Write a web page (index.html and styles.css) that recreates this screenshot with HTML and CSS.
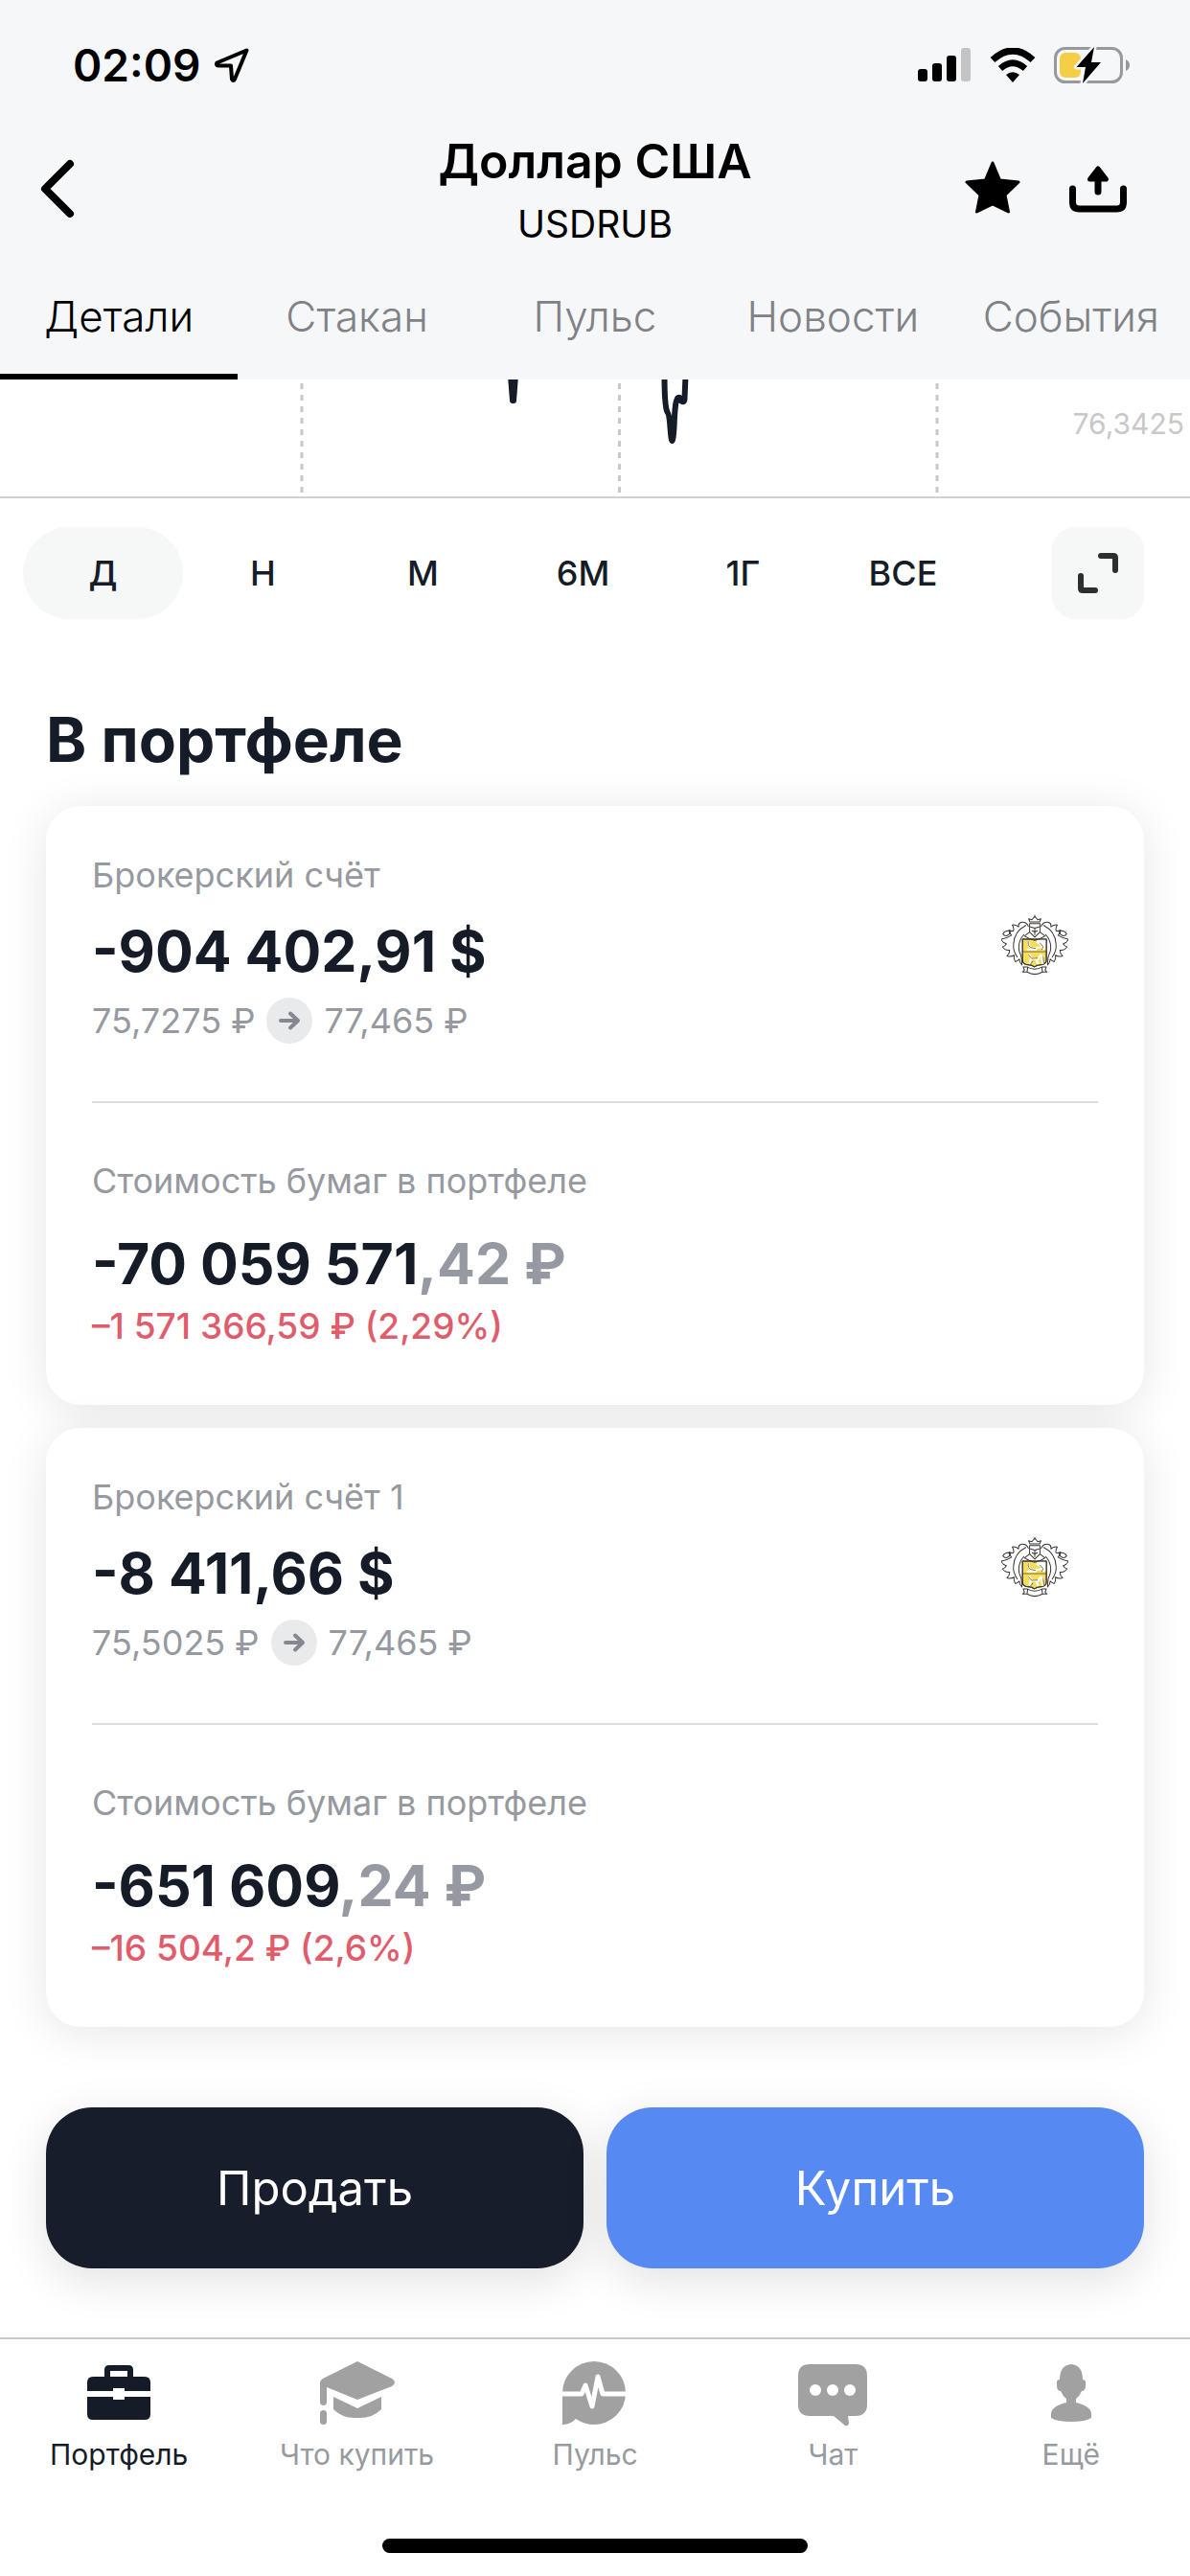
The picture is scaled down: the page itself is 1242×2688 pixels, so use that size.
FILE: index.html
```html
<!DOCTYPE html>
<html lang="ru">
<head>
    <meta charset="UTF-8">
    <meta name="viewport" content="width=device-width, initial-scale=1.0">
    <title>Доллар США</title>
    <link rel="stylesheet" href="styles.css">
</head>
<body>
    <svg width="0" height="0" class="defs" aria-hidden="true">
        <symbol id="emblem" viewBox="0 0 208 188">
            <g fill="none" stroke="#3a3733" stroke-width="3" stroke-linejoin="round" stroke-linecap="round">
                <!-- leaves -->
                <path d="M84 36Q78 22 62 24q-10 2-8 14-10-8-20-6 6 8 4 18-8 2-14-2 0 10 8 16-14 10-32 12 4 12 16 14-4 8-12 10 8 12 22 10 0 10-8 18 12 4 22-2-2 12 4 20 8-2 12-8 0 10 8 18 2-24-8-42-6-30 14-52"/>
                <path d="M124 36q6-14 22-12 10 2 8 14 10-8 20-6-6 8-4 18 8 2 14-2 0 10-8 16 14 10 32 12-4 12-16 14 4 8 12 10-8 12-22 10 0 10 8 18-12 4-22-2 2 12-4 20-8-2-12-8 0 10-8 18-2-24 8-42 6-30-14-52"/>
                <path d="M76 34Q40 52 38 92q-2 20 12 40M132 34q36 18 38 58 2 20-12 40"/>
                <path d="M5 60q8-14 24-8-4 12-14 14-6 0-10-6zM203 60q-8-14-24-8 4 12 14 14 6 0 10-6z"/>
                <!-- shield -->
                <path d="M66 76h74v64q0 12-12 15l-16 2-9 5-9-5-16-2q-12-3-12-15z" fill="#f7dc58"/>
                <path d="M110 78h28v30l-12-3-6-12-12-6z" fill="#fff" stroke="none"/>
                <path d="M85 84q-2 12 6 17l12 3q12 0 22-4l6 6M82 108h26" stroke="#fff" stroke-width="6"/>
                <path d="M88 150l4-14 22 2 8-12 8 6-4 6 4 14M94 138l-6-12M110 142l4 10" stroke="#fff" stroke-width="7"/>
                <path d="M66 115h74M84 84q-2 14 8 18l14 3M120 88l10 12-4 8M86 126l8 10 18-1M130 130l2 20M98 144l-6 8" stroke-width="2"/>
                <path d="M66 76h74v64q0 12-12 15l-16 2-9 5-9-5-16-2q-12-3-12-15z"/>
                <!-- helmet and crown -->
                <path d="M85 13l4 10h30l4-10-10 3-9-11-9 11zM104 2v6"/>
                <path d="M88 28v26l16 16 16-16V28zM91 38l13 4 13-4M104 42v20M96 50l8 4 8-4"/>
                <path d="M88 54L72 66l14 8 18 6 18-6 14-8-16-12"/>
                <!-- ribbon -->
                <path d="M68 162l12 0q24 14 48 0l12 0-4 10 6 6h-14q-24 14-48 0H66l6-6zM82 164l-2 14M126 164l2 14"/>
            </g>
        </symbol>
        <symbol id="arrow" viewBox="0 0 48 48">
            <circle cx="24" cy="24" r="24" fill="#e9eaec"/>
            <path d="M15 24h17M25 16.500l8 7.500-8 7.500" fill="none" stroke="#85888e" stroke-width="4" stroke-linecap="round" stroke-linejoin="round"/>
        </symbol>
    </svg>

    <header class="header">
        <div class="status">
            <div class="status-left">
                <span class="time">02:09</span>
                <svg width="38" height="38" viewBox="0 0 38 38">
                    <path d="M34.500 3.500L3.500 16.500q-1.500 2 1 3h13.500l1 14q1.500 3 3 0z" fill="none" stroke="#000" stroke-width="4" stroke-linejoin="round"/>
                </svg>
            </div>
            <div class="status-right">
                <svg width="56" height="36" viewBox="0 0 56 36">
                    <rect x="0" y="22" width="10" height="13" rx="3"/>
                    <rect x="15" y="16" width="10" height="19" rx="3"/>
                    <rect x="30" y="8" width="10" height="27" rx="3"/>
                    <rect x="45" y="0" width="10" height="35" rx="3" fill="#c3c4c6"/>
                </svg>
                <svg width="48" height="36" viewBox="0 0 48 36">
                    <path d="M3 12.500Q24-6.500 45 12.500" fill="none" stroke="#000" stroke-width="7"/>
                    <path d="M11 21.500q13-11.500 26 0" fill="none" stroke="#000" stroke-width="6.500"/>
                    <path d="M17 28q7-5.500 14 0l-7 8z"/>
                </svg>
                <svg width="80" height="40" viewBox="0 0 80 40">
                    <rect x="1.500" y="2.500" width="69" height="35" rx="10" fill="none" stroke="#98999b" stroke-width="3"/>
                    <path d="M75 14q4 2 4 6t-4 6z" fill="#98999b"/>
                    <rect x="6" y="7" width="22" height="26" rx="6" fill="#f6ce46"/>
                    <path d="M42 1L23.500 22h9.500L30 39l19-22H39z" stroke="#f6f7f9" stroke-width="5" stroke-linejoin="round"/>
                    <path d="M42 1L23.500 22h9.500L30 39l19-22H39z"/>
                </svg>
            </div>
        </div>

        <div class="nav">
            <button class="icon-button back" aria-label="Назад">
                <svg width="38" height="64" viewBox="0 0 38 64">
                    <path d="M33 5L7 31l26 26" fill="none" stroke="#000" stroke-width="8" stroke-linecap="round" stroke-linejoin="round"/>
                </svg>
            </button>
            <div class="nav-title">
                <h1>Доллар США</h1>
                <p>USDRUB</p>
            </div>
            <div class="nav-actions">
                <button class="icon-button" aria-label="В избранное">
                    <svg width="60" height="60" viewBox="0 0 60 60">
                        <path d="M30 2l7.500 18L57 22 43 35.500 46.500 53 30 45 13.500 53 17 35.500 3 22l19.500-2z" stroke="#000" stroke-width="3" stroke-linejoin="round"/>
                    </svg>
                </button>
                <button class="icon-button" aria-label="Поделиться">
                    <svg width="60" height="60" viewBox="0 0 60 60">
                        <path d="M3.500 29v14q0 7 7 7h39q7 0 7-7V29M30 32V16" fill="none" stroke="#000" stroke-width="7" stroke-linecap="round"/>
                        <path d="M30 8l8.500 11h-17z" stroke="#000" stroke-width="5" stroke-linejoin="round"/>
                    </svg>
                </button>
            </div>
        </div>

        <nav class="tabs">
            <a href="#" class="tab active">Детали</a>
            <a href="#" class="tab">Стакан</a>
            <a href="#" class="tab">Пульс</a>
            <a href="#" class="tab">Новости</a>
            <a href="#" class="tab">События</a>
        </nav>
    </header>

    <main>
        <div class="chart">
            <svg viewBox="0 0 1242 122">
                <path d="M315 4v118M646.500 4v118M978 4v118" stroke="#c8c8c8" stroke-width="3" stroke-dasharray="6 6"/>
                <path d="M533 -4l2 26h1l2-26M693.500 -4q0 32 3 38 2 2 3 16 1 14 2 14 1 0 2-14 1-30 4-31 3-1 3 3 4 3 4-2l1-24" fill="none" stroke="#151c28" stroke-width="6" stroke-linejoin="round"/>
            </svg>
            <span class="chart-label">76,3425</span>
        </div>

        <div class="periods">
            <div class="period-list">
                <button class="period active">Д</button>
                <button class="period">Н</button>
                <button class="period">М</button>
                <button class="period">6М</button>
                <button class="period">1Г</button>
                <button class="period">ВСЕ</button>
            </div>
            <button class="expand" aria-label="Развернуть">
                <svg width="48" height="48" viewBox="0 0 48 48">
                    <path d="M27 6h13q2 0 2 2v13M21 42H8q-2 0-2-2V27" fill="none" stroke="#2d2f2f" stroke-width="6" stroke-linecap="round"/>
                </svg>
            </button>
        </div>

        <section class="portfolio">
            <h2>В портфеле</h2>

            <article class="card">
                <div class="card-top">
                    <div>
                        <p class="label">Брокерский счёт</p>
                        <p class="amount">-904 402,91 $</p>
                        <p class="prices">75,7275 ₽ <svg width="48" height="48"><use href="#arrow"/></svg> 77,465 ₽</p>
                    </div>
                    <svg class="emblem" width="70" height="64"><use href="#emblem"/></svg>
                </div>
                <div class="card-bottom">
                    <p class="label">Стоимость бумаг в портфеле</p>
                    <p class="amount">-70 059 571<span>,42 ₽</span></p>
                    <p class="change">–1 571 366,59 ₽ (2,29%)</p>
                </div>
            </article>

            <article class="card">
                <div class="card-top">
                    <div>
                        <p class="label">Брокерский счёт 1</p>
                        <p class="amount">-8 411,66 $</p>
                        <p class="prices">75,5025 ₽ <svg width="48" height="48"><use href="#arrow"/></svg> 77,465 ₽</p>
                    </div>
                    <svg class="emblem" width="70" height="64"><use href="#emblem"/></svg>
                </div>
                <div class="card-bottom">
                    <p class="label">Стоимость бумаг в портфеле</p>
                    <p class="amount">-651 609<span>,24 ₽</span></p>
                    <p class="change">–16 504,2 ₽ (2,6%)</p>
                </div>
            </article>
        </section>

        <div class="actions">
            <button class="action sell">Продать</button>
            <button class="action buy">Купить</button>
        </div>
    </main>

    <footer class="footer">
        <nav class="menu">
            <a href="#" class="menu-item active">
                <svg width="84" height="72" viewBox="0 0 84 72" fill="currentColor">
                    <path d="M27 19v-7q0-5 5-5h20q5 0 5 5v7h12q6 0 6 6v9H48v-3H36v3H9v-9q0-6 6-6zM33 19h18v-6H33z" fill-rule="evenodd"/>
                    <path d="M9 40h27v3h12v-3h27v18q0 6-6 6H15q-6 0-6-6z"/>
                </svg>
                Портфель
            </a>
            <a href="#" class="menu-item">
                <svg width="84" height="72" viewBox="0 0 84 72" fill="#a1a1a1">
                    <path d="M42 3l36 18q3 2 3 4t-3 4L42 43 10 30v15q0 4-3.500 4T3 45V25q0-2 3-4z"/>
                    <path d="M17 40l25 12 25-12v13q-10 10-25 9-15 1-25-9z"/>
                    <rect x="3" y="54" width="7" height="15" rx="3.500"/>
                </svg>
                Что купить
            </a>
            <a href="#" class="menu-item">
                <svg width="84" height="72" viewBox="0 0 84 72">
                    <path d="M8 69V36a33 33 0 1 1 33 33q-10 0-19-6-6 6-14 6z" fill="#a1a1a1"/>
                    <path d="M7 37h21l4-9 7 22 6-31 5 18h25" fill="none" stroke="#fff" stroke-width="5" stroke-linejoin="round"/>
                </svg>
                Пульс
            </a>
            <a href="#" class="menu-item">
                <svg width="84" height="72" viewBox="0 0 84 72">
                    <path d="M18 6h48q12 0 12 12v30q0 12-12 12h-8l1 8q-1 3-4 2L43 60H18Q6 60 6 48V18Q6 6 18 6z" fill="#a1a1a1"/>
                    <g fill="#fff">
                        <circle cx="24" cy="33" r="6"/>
                        <circle cx="42" cy="33" r="6"/>
                        <circle cx="60" cy="33" r="6"/>
                    </g>
                </svg>
                Чат
            </a>
            <a href="#" class="menu-item">
                <svg width="84" height="72" viewBox="0 0 84 72" fill="#a1a1a1">
                    <path d="M42 6q12 1 12 16 4 0 3 6 0 6-4 6-2 5-6 8v4q16 4 16 12v4q-6 4-21 4t-21-4v-4q0-8 16-12v-4q-4-3-6-8-4 0-4-6-1-6 3-6 0-15 12-16z"/>
                </svg>
                Ещё
            </a>
        </nav>
        <div class="home-bar"></div>
    </footer>
</body>
</html>
```
FILE: styles.css
```css
* {
    box-sizing: border-box;
}
body {
    display: flex;
    flex-direction: column;
    min-height: 100vh;
    margin: 0;
    background-color: #fff;
    font-family: Inter, 'Liberation Sans', sans-serif;
    color: #151c28;
}
h1, h2, p {
    margin: 0;
}
a {
    color: inherit;
    text-decoration: none;
}
button {
    font-family: inherit;
    color: inherit;
    border: none;
    padding: 0;
    cursor: pointer;
}
svg {
    display: block;
}
.defs {
    position: absolute;
}

/* header */
.header {
    background-color: #f6f7f9;
    color: #000;
}
.status {
    display: flex;
    justify-content: space-between;
    align-items: center;
    height: 136px;
    padding: 0 62px 0 76px;
}
.status-left {
    display: flex;
    align-items: center;
    gap: 14px;
}
.time {
    font-size: 46px;
    font-weight: 600;
}
.status-right {
    display: flex;
    align-items: center;
    gap: 19px;
}
.nav {
    display: grid;
    grid-template-columns: 1fr auto 1fr;
    align-items: center;
    height: 124px;
    padding: 0 66px 0 40px;
}
.nav-title {
    text-align: center;
    padding-right: 26px;
    margin-left: 26px;
    margin-right: -26px;
}
.nav-title h1 {
    font-size: 50px;
    font-weight: 600;
    line-height: 60px;
}
.nav-title p {
    margin-top: 12px;
    font-size: 39px;
    line-height: 48px;
}
.icon-button {
    background: none;
}
.back {
    justify-self: start;
}
.nav-actions {
    display: flex;
    justify-content: flex-end;
    gap: 50px;
}
.tabs {
    display: grid;
    grid-template-columns: repeat(5, 1fr);
}
.tab {
    padding: 46px 0 36px;
    border-bottom: 6px solid transparent;
    color: #808285;
    font-size: 44px;
    font-weight: 300;
    line-height: 48px;
    text-align: center;
}
.tab.active {
    color: #000;
    border-color: #000;
}

/* chart */
.chart {
    position: relative;
    border-bottom: 2px solid #d0d0d0;
}
.chart svg {
    width: 100%;
}
.chart-label {
    position: absolute;
    top: 28px;
    right: 6px;
    color: #c8c8c8;
    font-size: 30px;
    line-height: 36px;
}
.periods {
    display: flex;
    gap: 72px;
    padding: 30px 48px 0 24px;
}
.period-list {
    display: flex;
    flex: 1;
}
.period {
    flex: 1;
    height: 96px;
    border-radius: 48px;
    background: none;
    font-size: 36px;
    font-weight: 500;
}
.period.active {
    background-color: #f6f8f8;
}
.expand {
    display: flex;
    justify-content: center;
    align-items: center;
    width: 96px;
    height: 96px;
    border-radius: 24px;
    background-color: #f6f8f8;
}

/* portfolio cards */
.portfolio {
    display: flex;
    flex-direction: column;
    gap: 24px;
    padding: 86px 48px 0;
}
.portfolio h2 {
    margin-bottom: 5px;
    font-size: 64px;
    font-weight: 700;
    line-height: 80px;
}
.card {
    padding: 48px 48px 58px;
    border-radius: 36px;
    background-color: #fff;
    box-shadow: 0 6px 48px rgba(0, 0, 0, 0.1);
}
.card-top {
    display: flex;
    justify-content: space-between;
    padding-bottom: 60px;
    border-bottom: 2px solid #dcdddf;
}
.card-bottom {
    padding-top: 57px;
}
.label {
    color: #96999f;
    font-size: 36px;
    line-height: 48px;
}
.amount {
    font-size: 59px;
    font-weight: 700;
    line-height: 72px;
}
.amount span {
    color: #9699a2;
}
.card-top .amount {
    margin-top: 20px;
}
.card-bottom .amount {
    margin-top: 27px;
}
.prices {
    display: flex;
    align-items: center;
    gap: 12px;
    margin-top: 12px;
    color: #96999f;
    font-size: 36px;
    line-height: 48px;
}
.change {
    margin-top: 5px;
    color: #e05c6b;
    font-size: 37px;
    font-weight: 500;
    line-height: 48px;
}
.emblem {
    margin: 65px 31px 0 0;
}

/* buttons */
.actions {
    display: flex;
    gap: 24px;
    padding: 84px 48px 71px;
}
.action {
    flex: 1;
    height: 168px;
    border-radius: 48px;
    box-shadow: 0 12px 48px rgba(0, 0, 0, 0.12);
    color: #fff;
    font-size: 49px;
}
.sell {
    background-color: #171d2a;
}
.buy {
    background-color: #5689f2;
}

/* bottom menu */
.footer {
    position: relative;
    margin-top: auto;
    padding: 20px 0 24px;
    border-top: 2px solid #c8c8c8;
    background-color: #fff;
}
.menu {
    display: grid;
    grid-template-columns: repeat(5, 1fr);
}
.menu-item {
    display: flex;
    flex-direction: column;
    align-items: center;
    gap: 8px;
    color: #979a9f;
    font-size: 30px;
    line-height: 40px;
}
.menu-item.active {
    color: #151c28;
}
.home-bar {
    width: 444px;
    height: 15px;
    margin: 68px auto 0;
    border-radius: 8px;
    background-color: #000;
}
```
